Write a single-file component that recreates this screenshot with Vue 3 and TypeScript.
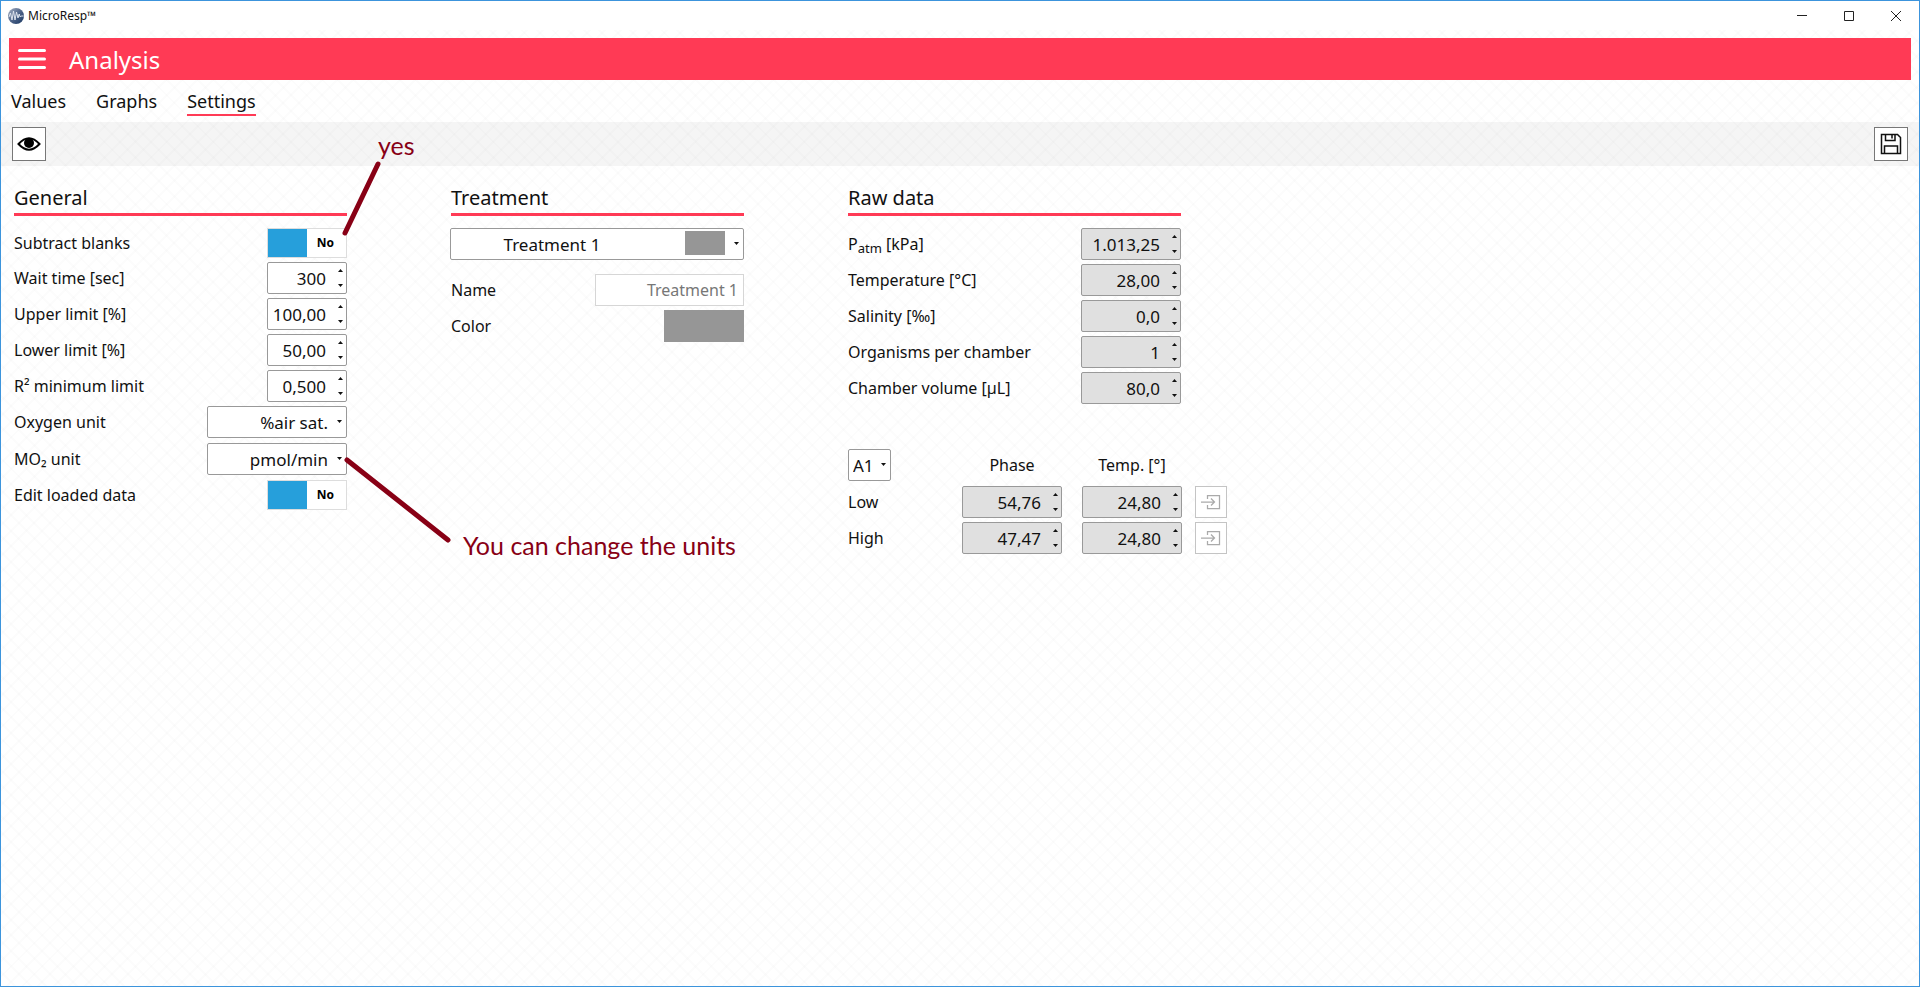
<script setup lang="ts">
import { ref, reactive } from 'vue'

interface Field {
  id: string
  label: string
  sub?: string
  rest?: string
  value: string
}

const tabs = ['Values', 'Graphs', 'Settings']
const activeTab = ref('Settings')

const subtractBlanks = ref(false)
const editLoaded = ref(false)
const oxygenUnit = ref('%air sat.')
const mo2Unit = ref('pmol/min')
const treatment = ref('Treatment 1')
const treatmentColor = ref('#969696')
const well = ref('A1')

const limits = reactive<Field[]>([
  { id: 'wait', label: 'Wait time [sec]', value: '300' },
  { id: 'upper', label: 'Upper limit [%]', value: '100,00' },
  { id: 'lower', label: 'Lower limit [%]', value: '50,00' },
  { id: 'r2', label: 'R² minimum limit', value: '0,500' },
])

const raw = reactive<Field[]>([
  { id: 'patm', label: 'P', sub: 'atm', rest: ' [kPa]', value: '1.013,25' },
  { id: 'temp', label: 'Temperature [°C]', value: '28,00' },
  { id: 'sal', label: 'Salinity [‰]', value: '0,0' },
  { id: 'org', label: 'Organisms per chamber', value: '1' },
  { id: 'vol', label: 'Chamber volume [µL]', value: '80,0' },
])

const calibration = reactive([
  { name: 'Low', phase: '54,76', temp: '24,80' },
  { name: 'High', phase: '47,47', temp: '24,80' },
])

function step(value: string, delta: number): string {
  const decimals = value.includes(',') ? value.split(',')[1].length : 0
  const n = Number(value.replace(/\./g, '').replace(',', '.')) + delta
  return n.toLocaleString('de-DE', { minimumFractionDigits: decimals, maximumFractionDigits: decimals })
}
</script>

<template>
  <div class="window">
    <header class="titlebar">
      <svg class="logo" viewBox="0 0 16 16" aria-hidden="true">
        <defs>
          <linearGradient id="ball" x1="0" y1="0" x2="1" y2="1">
            <stop offset="0" stop-color="#a9b3c6" />
            <stop offset="0.5" stop-color="#4f6489" />
            <stop offset="1" stop-color="#173560" />
          </linearGradient>
        </defs>
        <circle cx="8" cy="8" r="8" fill="url(#ball)" />
        <path d="M1 9l1.500-4 1.500 7 1.500-9 1.500 9 1.500-8 1.500 6 1.200-4 1 3 1-1h2.500" fill="none" stroke="#dfe5ef" stroke-width="1" />
      </svg>
      <span class="app-name">MicroResp™</span>
      <div class="controls">
        <button type="button" aria-label="Minimize"><svg viewBox="0 0 12 12"><path d="M1 5.500h10" /></svg></button>
        <button type="button" aria-label="Maximize"><svg viewBox="0 0 12 12"><path d="M1.500 1.500h9v9h-9z" /></svg></button>
        <button type="button" aria-label="Close"><svg viewBox="0 0 12 12"><path d="M1 1l10 10M11 1L1 11" /></svg></button>
      </div>
    </header>

    <div class="banner">
      <button type="button" class="menu" aria-label="Menu">
        <svg viewBox="0 0 28 22"><path d="M1.500 2.500h25M1.500 11h25M1.500 19.500h25" /></svg>
      </button>
      <h1>Analysis</h1>
    </div>

    <nav class="tabs">
      <a v-for="t in tabs" :key="t" href="#" :class="{ active: t === activeTab }" @click.prevent="activeTab = t">{{ t }}</a>
    </nav>

    <div class="toolbar">
      <button type="button" class="tool" aria-label="Preview">
        <svg width="24" height="16" viewBox="0 0 24 16">
          <path d="M1.500 8Q12-3.500 22.500 8 12 19.500 1.500 8z" fill="#fff" stroke="#000" stroke-width="2" />
          <circle cx="12" cy="7" r="5" fill="#000" />
        </svg>
      </button>
      <button type="button" class="tool" aria-label="Save">
        <svg width="22" height="22" viewBox="0 0 22 22" fill="none" stroke="#111" stroke-width="1.500">
          <path d="M1.500 1.500h16l3 3v16h-19z" />
          <path d="M5.500 1.500v6h9.500v-6M12 1.500v4M4.500 20.500v-7.500h13v7.500" />
        </svg>
      </button>
    </div>

    <main class="content">
      <section class="general">
        <h2>General</h2>
        <div class="row toggle-row">
          <label for="blanks">Subtract blanks</label>
          <span class="toggle">
            <input id="blanks" v-model="subtractBlanks" type="checkbox" />
            <span class="knob"></span><span class="state">{{ subtractBlanks ? 'Yes' : 'No' }}</span>
          </span>
        </div>
        <div v-for="f in limits" :key="f.id" class="row">
          <label :for="f.id">{{ f.label }}</label>
          <span class="spin small">
            <input :id="f.id" v-model="f.value" type="text" />
            <span class="arrows">
              <button type="button" aria-label="Increase" @click="f.value = step(f.value, 1)"><svg viewBox="0 0 5 3"><path d="M0 3l2.500-3L5 3z" /></svg></button>
              <button type="button" aria-label="Decrease" @click="f.value = step(f.value, -1)"><svg viewBox="0 0 5 3"><path d="M0 0l2.500 3L5 0z" /></svg></button>
            </span>
          </span>
        </div>
        <div class="row">
          <label for="oxygen">Oxygen unit</label>
          <span class="select unit">
            <select id="oxygen" v-model="oxygenUnit"><option>%air sat.</option><option>mg/L</option></select>
            <svg class="caret" viewBox="0 0 5 3"><path d="M0 0l2.500 3L5 0z" /></svg>
          </span>
        </div>
        <div class="row spaced">
          <label for="mo2">MO₂ unit</label>
          <span class="select unit">
            <select id="mo2" v-model="mo2Unit"><option>pmol/min</option><option>nmol/min</option></select>
            <svg class="caret" viewBox="0 0 5 3"><path d="M0 0l2.500 3L5 0z" /></svg>
          </span>
        </div>
        <div class="row toggle-row">
          <label for="edit">Edit loaded data</label>
          <span class="toggle">
            <input id="edit" v-model="editLoaded" type="checkbox" />
            <span class="knob"></span><span class="state">{{ editLoaded ? 'Yes' : 'No' }}</span>
          </span>
        </div>
      </section>

      <section class="treatment">
        <h2>Treatment</h2>
        <div class="select picker">
          <select v-model="treatment" aria-label="Treatment"><option>Treatment 1</option><option>Treatment 2</option></select>
          <span class="swatch"></span>
          <svg class="caret" viewBox="0 0 5 3"><path d="M0 0l2.500 3L5 0z" /></svg>
        </div>
        <div class="row name-row">
          <label for="name">Name</label>
          <input id="name" class="name" type="text" :value="treatment" disabled />
        </div>
        <div class="row">
          <label for="color">Color</label>
          <input id="color" v-model="treatmentColor" class="color" type="color" />
        </div>
      </section>

      <section class="raw">
        <h2>Raw data</h2>
        <div v-for="f in raw" :key="f.id" class="row">
          <label :for="f.id">{{ f.label }}<sub v-if="f.sub">{{ f.sub }}</sub>{{ f.rest }}</label>
          <span class="spin grey">
            <input :id="f.id" v-model="f.value" type="text" readonly />
            <span class="arrows">
              <button type="button" aria-label="Increase"><svg viewBox="0 0 5 3"><path d="M0 3l2.500-3L5 3z" /></svg></button>
              <button type="button" aria-label="Decrease"><svg viewBox="0 0 5 3"><path d="M0 0l2.500 3L5 0z" /></svg></button>
            </span>
          </span>
        </div>
        <table>
          <thead>
            <tr>
              <th class="first">
                <span class="select well">
                  <select v-model="well" aria-label="Well"><option>A1</option><option>A2</option></select>
                  <svg class="caret" viewBox="0 0 5 3"><path d="M0 0l2.500 3L5 0z" /></svg>
                </span>
              </th>
              <th scope="col">Phase</th>
              <th scope="col">Temp. [°]</th>
              <th class="end"></th>
            </tr>
          </thead>
          <tbody>
            <tr v-for="c in calibration" :key="c.name">
              <th scope="row" class="first">{{ c.name }}</th>
              <td v-for="k in (['phase', 'temp'] as const)" :key="k">
                <span class="spin grey">
                  <input v-model="c[k]" type="text" readonly :aria-label="c.name + ' ' + k" />
                  <span class="arrows">
                    <button type="button" aria-label="Increase"><svg viewBox="0 0 5 3"><path d="M0 3l2.500-3L5 3z" /></svg></button>
                    <button type="button" aria-label="Decrease"><svg viewBox="0 0 5 3"><path d="M0 0l2.500 3L5 0z" /></svg></button>
                  </span>
                </span>
              </td>
              <td class="end">
                <button type="button" class="import" disabled :aria-label="'Import ' + c.name">
                  <svg width="20" height="16" viewBox="0 0 20 16"><path d="M6.500 5V1.500h12v13h-12V11M0 8h13.500M10 4.500L13.500 8 10 11.500" /></svg>
                </button>
              </td>
            </tr>
          </tbody>
        </table>
      </section>
    </main>

    <svg class="strokes" width="460" height="560" viewBox="0 0 460 560" aria-hidden="true">
      <path d="M377 163L344 232M346 459L447 539" />
    </svg>
    <span class="note yes">yes</span>
    <span class="note units">You can change the units</span>
  </div>
</template>

<style>
body {
  margin: 0;
}
</style>

<style scoped>
* {
  box-sizing: border-box;
}
.window {
  position: relative;
  min-height: 100vh;
  border: 1px solid #3c94dc;
  font-family: 'Noto Sans', 'Open Sans', sans-serif;
  font-size: 16px;
  color: #111;
  background:
    repeating-linear-gradient(45deg, transparent 0 9px, rgba(0, 0, 0, 0.01) 9px 11px),
    repeating-linear-gradient(-45deg, transparent 0 9px, rgba(0, 0, 0, 0.01) 9px 11px),
    #fff;
}
button,
input,
select {
  font: inherit;
  color: inherit;
  margin: 0;
  padding: 0;
  border: 0;
  background: none;
}
.titlebar {
  display: flex;
  align-items: center;
  height: 29px;
  padding-left: 7px;
  background: #fff;
}
.logo {
  width: 16px;
  height: 16px;
}
.app-name {
  margin-left: 4px;
  font-size: 12px;
  line-height: 16px;
}
.controls {
  display: flex;
  margin-left: auto;
}
.controls button {
  display: flex;
  align-items: center;
  justify-content: center;
  width: 47px;
  height: 28px;
}
.controls svg {
  width: 12px;
  height: 12px;
  fill: none;
  stroke: #222;
}
.banner {
  display: flex;
  align-items: center;
  height: 42px;
  margin: 8px 8px 0;
  padding-left: 9px;
  background: #ff3a55;
  color: #fff;
}
.menu {
  display: flex;
}
.menu svg {
  width: 28px;
  height: 22px;
  stroke: #fff;
  stroke-width: 3;
  stroke-linecap: round;
}
h1 {
  margin: 0 0 0 23px;
  padding-top: 2px;
  font-size: 24px;
  line-height: 32px;
  font-weight: 400;
}
.tabs {
  display: flex;
  gap: 30px;
  height: 42px;
  padding: 8px 10px 0;
}
.tabs a {
  height: 28px;
  font-size: 18px;
  line-height: 26px;
  color: #111;
  text-decoration: none;
}
.tabs a.active {
  border-bottom: 2px solid #ff3a55;
}
.toolbar {
  display: flex;
  justify-content: space-between;
  align-items: center;
  height: 44px;
  padding: 0 11px;
  background: rgba(0, 0, 0, 0.04);
}
.tool {
  display: flex;
  align-items: center;
  justify-content: center;
  width: 34px;
  height: 34px;
  border: 1px solid #777;
  background: #fff;
}
.content {
  display: grid;
  grid-template-columns: 333px 293px 379px;
  gap: 104px;
  align-items: start;
  padding: 18px 13px;
}
h2 {
  margin: 0 0 12px;
  height: 32px;
  border-bottom: 3px solid #ff3a55;
  font-size: 20px;
  line-height: 28px;
  font-weight: 400;
}
.row {
  display: flex;
  align-items: center;
  justify-content: space-between;
  height: 32px;
  margin-bottom: 4px;
}
.toggle-row {
  height: 30px;
}
.spaced {
  margin: 5px 0;
}
sub {
  font-size: 13px;
  line-height: 0;
  vertical-align: -3px;
}
.toggle {
  position: relative;
  display: flex;
  width: 80px;
  height: 30px;
  border: 1px solid #ddd;
  background: #fff;
}
.toggle input {
  position: absolute;
  inset: 0;
  width: 100%;
  height: 100%;
  opacity: 0;
}
.knob {
  width: 39px;
  background: #269fdb;
}
.state {
  flex: 1;
  padding-right: 2px;
  text-align: center;
  font-size: 12px;
  line-height: 28px;
  font-weight: 700;
  color: #000;
}
.spin {
  display: flex;
  width: 100px;
  height: 32px;
  border: 1px solid #999;
  border-radius: 2px;
  background: #fff;
}
.spin.small {
  width: 80px;
}
.spin.grey {
  background: #e0e0e0;
}
.spin input {
  flex: 1;
  min-width: 0;
  text-align: right;
  font-size: 17px;
}
.arrows {
  display: flex;
  flex-direction: column;
  width: 20px;
}
.arrows button {
  display: flex;
  flex: 1;
  align-items: center;
  justify-content: center;
  padding-left: 8px;
}
.arrows svg,
.caret {
  width: 5px;
  height: 3px;
  fill: #111;
}
.select {
  position: relative;
  display: flex;
  height: 32px;
}
.select select {
  width: 100%;
  appearance: none;
  border: 1px solid #999;
  border-radius: 2px;
  background: #fff;
  font-size: 17px;
}
.caret {
  position: absolute;
  right: 5px;
  top: 14px;
  pointer-events: none;
}
.unit {
  width: 140px;
}
.unit select {
  padding-right: 18px;
  text-align-last: right;
}
.picker {
  margin: 0 0 14px -1px;
}
.picker select {
  padding-right: 90px;
  text-align-last: center;
}
.swatch {
  position: absolute;
  right: 19px;
  top: 3px;
  width: 40px;
  height: 24px;
  background: #969696;
  pointer-events: none;
}
.name {
  width: 149px;
  height: 32px;
  padding: 0 5px;
  border: 1px solid #d6d6d6;
  background: #fff;
  text-align: right;
  color: #777;
}
.color {
  width: 80px;
  height: 32px;
  appearance: none;
}
.color::-webkit-color-swatch-wrapper {
  padding: 0;
}
.color::-webkit-color-swatch {
  border: 0;
  border-radius: 0;
}
.raw h2,
.raw .row {
  width: 333px;
}
table {
  margin-top: 45px;
  border-collapse: collapse;
  table-layout: fixed;
  width: 379px;
}
th,
td {
  width: 120px;
  padding: 0 0 4px 20px;
  height: 36px;
  font-weight: 400;
}
thead th {
  height: 37px;
  padding-bottom: 5px;
}
th.first {
  width: 94px;
  padding-left: 0;
  text-align: left;
}
td.end,
th.end {
  width: 45px;
  padding-left: 13px;
}
.well {
  width: 43px;
}
.well select {
  padding-left: 4px;
}
.import {
  display: flex;
  align-items: center;
  justify-content: center;
  width: 32px;
  height: 32px;
  border: 1px solid #c4c4c4;
  background: #fff;
}
.import svg {
  fill: none;
  stroke: #aaa;
  stroke-width: 1.25;
}
.strokes {
  position: absolute;
  left: 0;
  top: 0;
  pointer-events: none;
  fill: none;
  stroke: #880015;
  stroke-width: 5;
  stroke-linecap: round;
}
.note {
  position: absolute;
  font-family: Lato, sans-serif;
  font-size: 25px;
  line-height: 30px;
  color: #880015;
  white-space: nowrap;
}
.yes {
  left: 377px;
  top: 129px;
}
.units {
  left: 462px;
  top: 529px;
}
</style>
